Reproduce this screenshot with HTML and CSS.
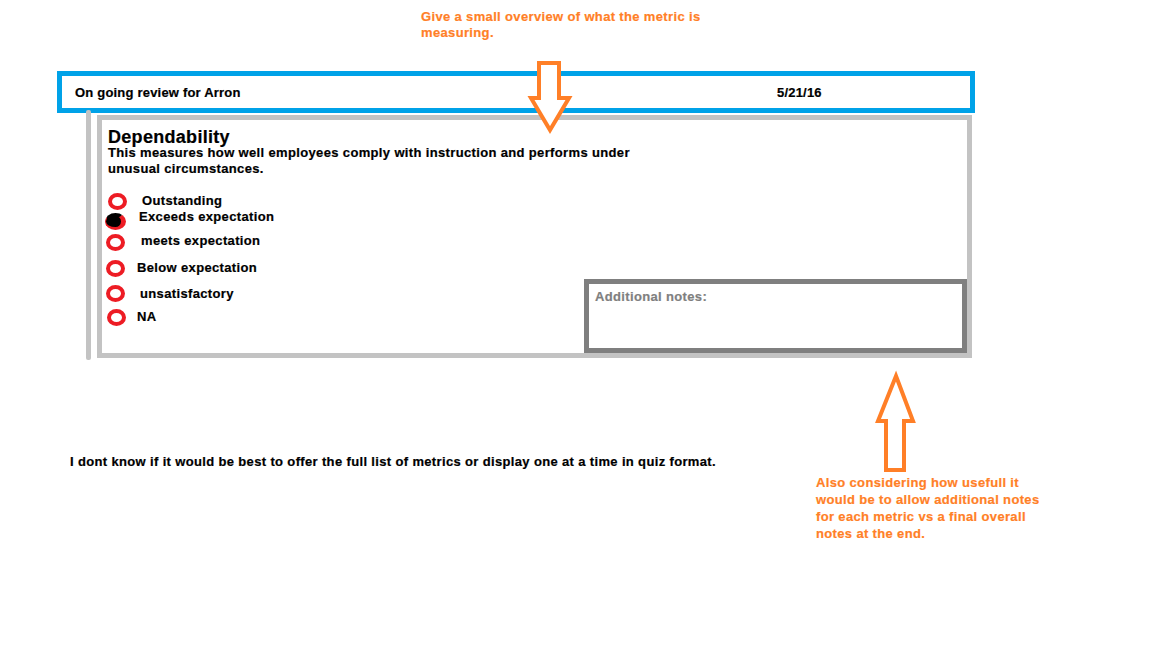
FILE: index.html
```html
<!DOCTYPE html>
<html lang="en">
<head>
<meta charset="utf-8">
<title>On going review</title>
<link rel="stylesheet" href="styles.css">
</head>
<body>
<div class="page">
  <p class="note note-top">Give a small overview of what the metric is<br>measuring.</p>

  <section class="review">
    <header class="review-head">
      <span class="name">On going review for Arron</span>
      <span class="date">5/21/16</span>
    </header>
    <div class="review-body">
      <div class="rail"></div>
      <div class="card">
        <h2 class="title">Dependability</h2>
        <p class="desc">This measures how well employees comply with instruction and performs under<br>unusual circumstances.</p>
        <div class="card-main">
          <ul class="options">
            <li class="opt"><span class="radio"></span><span class="label">Outstanding</span></li>
            <li class="opt"><span class="radio checked"></span><span class="label">Exceeds expectation</span></li>
            <li class="opt"><span class="radio"></span><span class="label">meets expectation</span></li>
            <li class="opt"><span class="radio"></span><span class="label">Below expectation</span></li>
            <li class="opt"><span class="radio"></span><span class="label">unsatisfactory</span></li>
            <li class="opt"><span class="radio"></span><span class="label">NA</span></li>
          </ul>
          <div class="notes">Additional notes:</div>
        </div>
      </div>
    </div>
  </section>

  <p class="question">I dont know if it would be best to offer the full list of metrics or display one at a time in quiz format.</p>

  <svg class="arrow arrow-down" width="50" height="80" viewBox="525 58 50 80">
    <path d="M539,63 L559,63 L559,98 L569,98 L550,130 L531,98 L539,98 Z" fill="#fff" stroke="#ff7f27" stroke-width="4" stroke-linejoin="miter"/>
  </svg>
  <svg class="arrow arrow-up" width="50" height="110" viewBox="872 368 50 110">
    <path d="M896,376 L913,421 L904,421 L904,470 L886,470 L886,421 L878,421 Z" fill="#fff" stroke="#ff7f27" stroke-width="4" stroke-linejoin="miter"/>
  </svg>

  <p class="note note-bottom">Also considering how usefull it<br>would be to allow additional notes<br>for each metric vs a final overall<br>notes at the end.</p>
</div>
</body>
</html>
```

FILE: styles.css
```css
* { box-sizing: border-box; }

html, body {
  margin: 0;
  padding: 0;
  background: #fff;
}

body {
  font-family: "Liberation Sans", Arial, sans-serif;
  font-weight: bold;
  font-size: 13px;
  line-height: 16px;
  letter-spacing: 0.35px;
  color: #000;
  -webkit-text-stroke: 0.2px currentColor;
}

.page {
  position: relative;
  width: 1152px;
  height: 648px;
  overflow: hidden;
  padding-top: 71px;
}

p, h2, ul { margin: 0; padding: 0; }

.note {
  position: absolute;
  color: #ff7f27;
}

.note-top {
  left: 421px;
  top: 9px;
  line-height: 16px;
}

.note-bottom {
  left: 816px;
  top: 474px;
  line-height: 17px;
}

.arrow {
  position: absolute;
  display: block;
}

.arrow-down { left: 525px; top: 58px; }
.arrow-up { left: 872px; top: 368px; }

.review {
  margin-left: 57px;
  width: 918px;
}

.review-head {
  display: flex;
  height: 42px;
  border: 5px solid #00a2e8;
  padding-left: 13px;
  padding-top: 1px;
  line-height: 31px;
  letter-spacing: 0.2px;
}

.name { flex: 0 0 702px; }

.review-body {
  display: flex;
  align-items: flex-start;
}

.rail {
  width: 5px;
  height: 250px;
  margin-left: 29px;
  margin-top: -3px;
  background: #c3c3c3;
  border-radius: 2px;
}

.card {
  display: flex;
  flex-direction: column;
  width: 875px;
  height: 243px;
  margin-left: 6px;
  margin-top: 2px;
  border: 5px solid #c3c3c3;
  padding: 11px 0 0 6px;
}

.title {
  font-size: 18px;
  line-height: 13px;
  font-weight: bold;
  letter-spacing: 0.3px;
}

.desc {
  margin-top: 1px;
  line-height: 16px;
}

.card-main {
  flex: 1;
  display: flex;
  align-items: flex-end;
}

.options {
  list-style: none;
  align-self: flex-start;
  margin-top: 16px;
}

.opt {
  display: flex;
  align-items: center;
  height: 16px;
}

.radio {
  position: relative;
  flex: 0 0 19px;
  width: 19px;
  height: 17px;
  border: 4px solid #ed1c24;
  border-radius: 50%;
  background: #fff;
}

.radio.checked {
  width: 21px;
  flex-basis: 21px;
  height: 17px;
  background: #000;
  border-width: 3px 5px 3px 1px;
  border-color: #000 #ed1c24 #ed1c24 #ed1c24;
}

.opt:nth-child(1) { margin-left: 0; }
.opt:nth-child(1) .label { margin-left: 15px; margin-top: -1px; }

.opt:nth-child(2) { margin-top: 4px; margin-left: -3px; }
.opt:nth-child(2) .label { margin-left: 13px; margin-top: -8px; }

.opt:nth-child(3) { margin-top: 5px; margin-left: -2px; }
.opt:nth-child(3) .label { margin-left: 16px; margin-top: -3px; }

.opt:nth-child(4) { margin-top: 10px; margin-left: -2px; }
.opt:nth-child(4) .label { margin-left: 12px; }

.opt:nth-child(5) { margin-top: 9px; margin-left: -2px; }
.opt:nth-child(5) .label { margin-left: 15px; margin-top: 1px; }

.opt:nth-child(6) { margin-top: 8px; margin-left: -1px; }
.opt:nth-child(6) .label { margin-left: 11px; }

.notes {
  margin-left: auto;
  width: 383px;
  height: 74px;
  border: 5px solid #7f7f7f;
  padding: 5px 0 0 6px;
  color: #7f7f7f;
}

.question {
  margin-top: 94px;
  margin-left: 70px;
}
```
